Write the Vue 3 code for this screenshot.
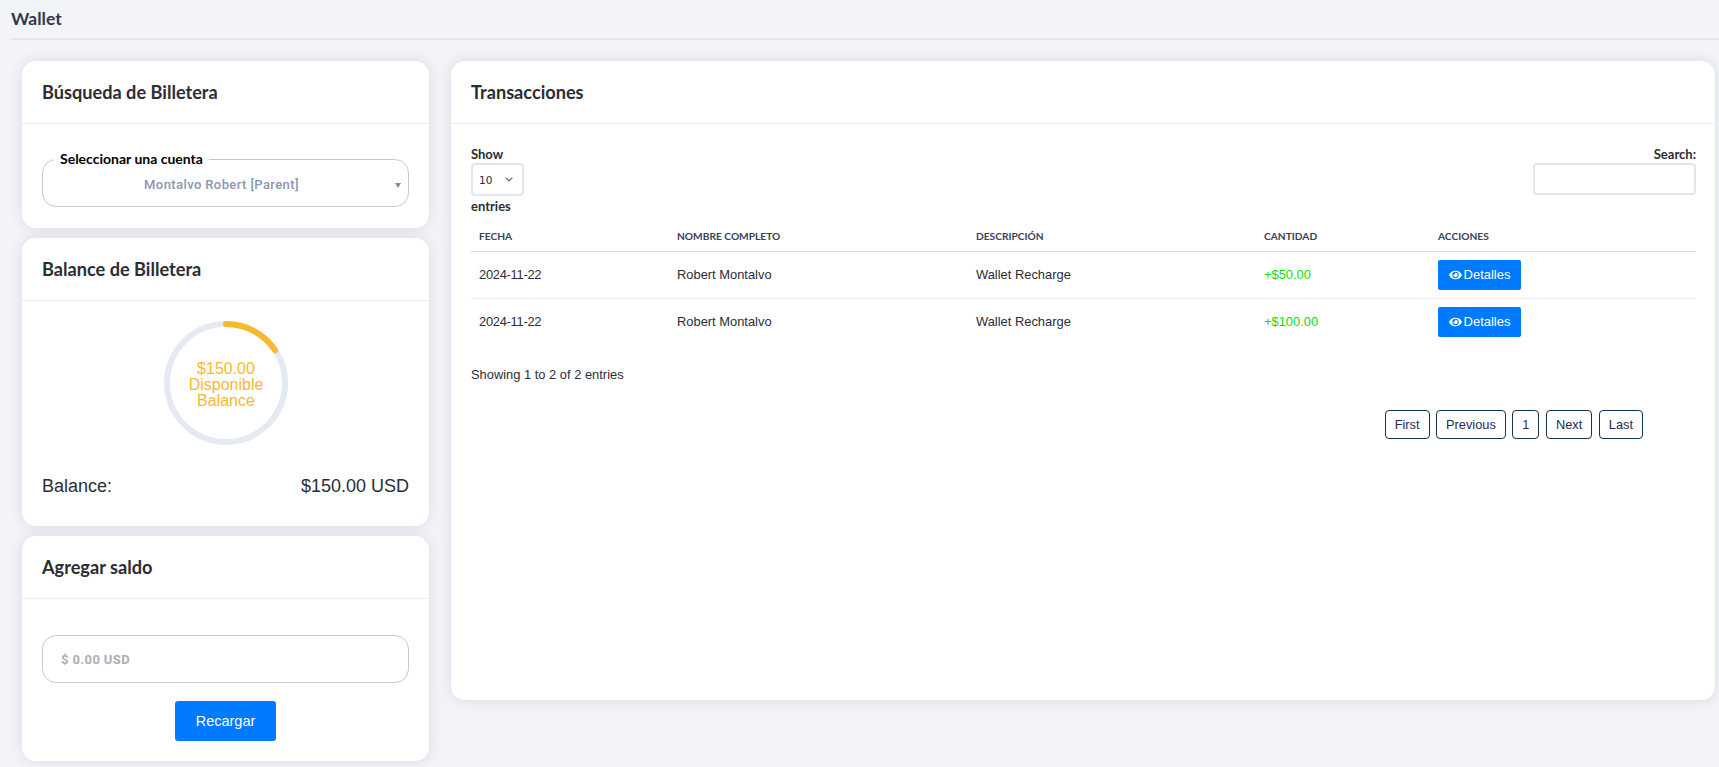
<script setup>
const rows = [
  { fecha: '2024-11-22', nombre: 'Robert Montalvo', desc: 'Wallet Recharge', monto: '+$50.00' },
  { fecha: '2024-11-22', nombre: 'Robert Montalvo', desc: 'Wallet Recharge', monto: '+$100.00' }
]
const pages = ['First', 'Previous', '1', 'Next', 'Last']
</script>

<template>
  <div class="page">
    <h1 class="page-title">Wallet</h1>
    <div class="columns">
      <div class="left">
        <section class="card">
          <h2 class="card-head">Búsqueda de Billetera</h2>
          <div class="body body-search">
            <fieldset class="account">
              <legend>Seleccionar una cuenta</legend>
              <span class="account-value">Montalvo Robert [Parent]</span>
              <span class="caret"></span>
            </fieldset>
          </div>
        </section>

        <section class="card">
          <h2 class="card-head">Balance de Billetera</h2>
          <div class="body body-balance">
            <div class="ring">
              <svg width="124" height="124" viewBox="0 0 124 124">
                <circle cx="62" cy="62" r="59" fill="none" stroke="#e5e9f2" stroke-width="6" />
                <circle cx="62" cy="62" r="59" fill="none" stroke="#f7b92f" stroke-width="6" stroke-linecap="round"
                  pathLength="100" stroke-dasharray="15.6 100" transform="rotate(-90 62 62)" />
              </svg>
              <div class="ring-text">$150.00<br />Disponible<br />Balance</div>
            </div>
            <div class="balance-row">
              <span>Balance:</span>
              <span>$150.00 USD</span>
            </div>
          </div>
        </section>

        <section class="card">
          <h2 class="card-head">Agregar saldo</h2>
          <div class="body body-add">
            <input class="amount" type="text" placeholder="$ 0.00 USD" />
            <button class="recharge" type="button">Recargar</button>
          </div>
        </section>
      </div>

      <section class="card card-main">
        <h2 class="card-head">Transacciones</h2>
        <div class="body body-main">
          <div class="controls">
            <label class="length">
              <span>Show</span>
              <select class="length-select">
                <option>10</option>
              </select>
              <span>entries</span>
            </label>
            <label class="search">
              <span>Search:</span>
              <input class="search-input" type="text" />
            </label>
          </div>

          <table class="grid">
            <colgroup>
              <col class="c1" />
              <col class="c2" />
              <col class="c3" />
              <col class="c4" />
              <col />
            </colgroup>
            <thead>
              <tr>
                <th>Fecha</th>
                <th>Nombre Completo</th>
                <th>Descripción</th>
                <th>Cantidad</th>
                <th>Acciones</th>
              </tr>
            </thead>
            <tbody>
              <tr v-for="(row, i) in rows" :key="i">
                <td class="date-cell">{{ row.fecha }}</td>
                <td>{{ row.nombre }}</td>
                <td>{{ row.desc }}</td>
                <td class="amount-cell">{{ row.monto }}</td>
                <td>
                  <button class="details" type="button">
                    <svg class="eye" viewBox="0 0 576 512" width="13" height="12" fill="currentColor">
                      <path d="M572.52 241.4C518.29 135.59 410.93 64 288 64S57.68 135.64 3.48 241.41a32.35 32.35 0 0 0 0 29.19C57.71 376.41 165.07 448 288 448s230.32-71.64 284.52-177.41a32.35 32.35 0 0 0 0-29.19zM288 400a144 144 0 1 1 144-144 143.93 143.93 0 0 1-144 144zm0-240a95.31 95.31 0 0 0-25.31 3.79 47.85 47.85 0 0 1-66.9 66.9A95.78 95.78 0 1 0 288 160z" />
                    </svg>
                    Detalles
                  </button>
                </td>
              </tr>
            </tbody>
          </table>

          <p class="info">Showing 1 to 2 of 2 entries</p>

          <nav class="pager">
            <button v-for="p in pages" :key="p" class="page-btn" type="button">{{ p }}</button>
          </nav>
        </div>
      </section>
    </div>
  </div>
</template>

<style scoped>
.page {
  height: 767px;
  box-sizing: border-box;
  padding: 8px 0 0 11px;
  font-family: "Liberation Sans", Arial, sans-serif;
  color: #2b2b33;
  overflow: hidden;
}
.page-title {
  margin: 0;
  box-sizing: border-box;
  border-bottom: 2px solid #e6e8ee;
  height: 32px;
  font: 700 17.5px/21px Lato, sans-serif;
  color: #343a45;
}
.columns {
  display: flex;
  align-items: flex-start;
  gap: 22px;
  padding: 21px 4px 0 11px;
}
.left {
  width: 407px;
  flex: none;
  display: flex;
  flex-direction: column;
  gap: 10px;
}
.card {
  background: #fff;
  border-radius: 14px;
  box-shadow: 0 0 14px rgba(40, 50, 80, 0.12);
}
.card-head {
  margin: 0;
  height: 62px;
  padding: 0 20px;
  border-bottom: 1px solid #eceef4;
  font: 700 18.15px/62px Lato, sans-serif;
  color: #2b2d33;
}
.body-search {
  padding: 28px 20px 21px;
}
.account {
  position: relative;
  margin: 0;
  padding: 0 8px 0 0;
  height: 55px;
  box-sizing: border-box;
  border: 1px solid #c9c9cd;
  border-radius: 14px;
  text-align: center;
}
.account legend {
  margin-left: 11px;
  padding: 0 6px;
  font: 700 14px/14px Lato, sans-serif;
  color: #000;
  text-align: left;
}
.account-value {
  display: block;
  font: 500 13px/37px Roboto, sans-serif;
  letter-spacing: 0.4px;
  color: #8a97b0;
}
.caret {
  position: absolute;
  right: 7px;
  top: 17px;
  width: 0;
  height: 0;
  border-left: 3.5px solid transparent;
  border-right: 3.5px solid transparent;
  border-top: 5px solid #8a8a8a;
}
.body-balance {
  padding: 20px 20px 28px;
}
.ring {
  position: relative;
  width: 124px;
  height: 124px;
  margin: 0 auto;
}
.ring svg {
  display: block;
}
.ring-text {
  position: absolute;
  inset: 3px 0 0 1px;
  display: flex;
  align-items: center;
  justify-content: center;
  text-align: center;
  font-size: 16px;
  line-height: 16px;
  color: #f7b92f;
}
.balance-row {
  display: flex;
  justify-content: space-between;
  margin-top: 29px;
  font-size: 18px;
  line-height: 24px;
  color: #2b2d38;
}
.body-add {
  display: flex;
  flex-direction: column;
  align-items: center;
  padding: 36px 20px 20px;
}
.amount {
  width: 100%;
  height: 48px;
  box-sizing: border-box;
  padding: 0 18px;
  border: 1px solid #c9c9cd;
  border-radius: 14px;
  font: 700 13px Roboto, sans-serif;
  letter-spacing: 0.4px;
  outline: none;
}
.amount::placeholder {
  color: #aeaeb4;
}
.recharge {
  margin-top: 18px;
  width: 101px;
  height: 40px;
  border: 0;
  border-radius: 3px;
  background: #007bff;
  color: #fff;
  font: 14.5px "Liberation Sans", Arial, sans-serif;
}
.card-main {
  flex: 1;
  height: 639px;
}
.body-main {
  padding: 22px 19px 0 20px;
}
.controls {
  display: flex;
  justify-content: space-between;
  align-items: flex-start;
  font: 700 13px/16px Lato, sans-serif;
  color: #2b2d33;
}
.length {
  display: flex;
  flex-direction: column;
  align-items: flex-start;
  line-height: 16px;
}
.length-select {
  appearance: none;
  width: 53px;
  height: 33px;
  margin: 1px 0 2px;
  padding: 0 0 0 6px;
  border: 2px solid #e2e6f0;
  border-radius: 4px;
  background: #fff url("data:image/svg+xml,%3Csvg xmlns='http://www.w3.org/2000/svg' width='8' height='5'%3E%3Cpath d='M.7.7 4 4l3.3-3.3' fill='none' stroke='%23666' stroke-width='1.2'/%3E%3C/svg%3E") no-repeat right 9px center;
  font: 10.5px "DejaVu Sans", sans-serif;
  color: #2b2d38;
}
.search {
  display: flex;
  flex-direction: column;
  align-items: flex-end;
}
.search-input {
  width: 163px;
  height: 32px;
  box-sizing: border-box;
  margin-top: 1px;
  border: 2px solid #e2e6f0;
  border-radius: 4px;
  outline: none;
}
.grid {
  width: 100%;
  margin-top: 8px;
  border-collapse: collapse;
  table-layout: fixed;
}
.c1 { width: 198px; }
.c2 { width: 299px; }
.c3 { width: 288px; }
.c4 { width: 174px; }
.grid th {
  height: 29px;
  padding: 0 8px;
  box-sizing: border-box;
  border-bottom: 1px solid #d8dade;
  text-align: left;
  font: 700 10.2px Lato, sans-serif;
  text-transform: uppercase;
  color: #3a4256;
}
.grid td {
  height: 47px;
  padding: 0 8px;
  box-sizing: border-box;
  border-bottom: 1px solid #eef0f3;
  font-size: 12.9px;
  color: #2b2d38;
}
.grid tr:last-child td {
  border-bottom: 0;
}
.grid td.date-cell {
  letter-spacing: -0.28px;
}
.grid td.amount-cell {
  color: #0adf0a;
}
.details {
  display: inline-flex;
  align-items: center;
  gap: 2px;
  width: 83px;
  height: 30px;
  padding: 0;
  justify-content: center;
  border: 0;
  border-radius: 2px;
  background: #007bff;
  color: #fff;
  font: 13px "Liberation Sans", Arial, sans-serif;
}
.eye {
  flex: none;
}
.info {
  margin: 22px 0 0;
  font-size: 12.9px;
  line-height: 16px;
  color: #2b2d38;
}
.pager {
  display: flex;
  justify-content: flex-end;
  gap: 6.5px;
  margin-top: 27px;
  padding-right: 53px;
}
.page-btn {
  height: 29px;
  padding: 0 9px;
  border: 1px solid #17324d;
  border-radius: 4px;
  background: #fff;
  color: #1f2a55;
  font: 12.8px "Liberation Sans", Arial, sans-serif;
}
</style>

<style>
html, body {
  margin: 0;
  background: #f2f4f8;
}
</style>
